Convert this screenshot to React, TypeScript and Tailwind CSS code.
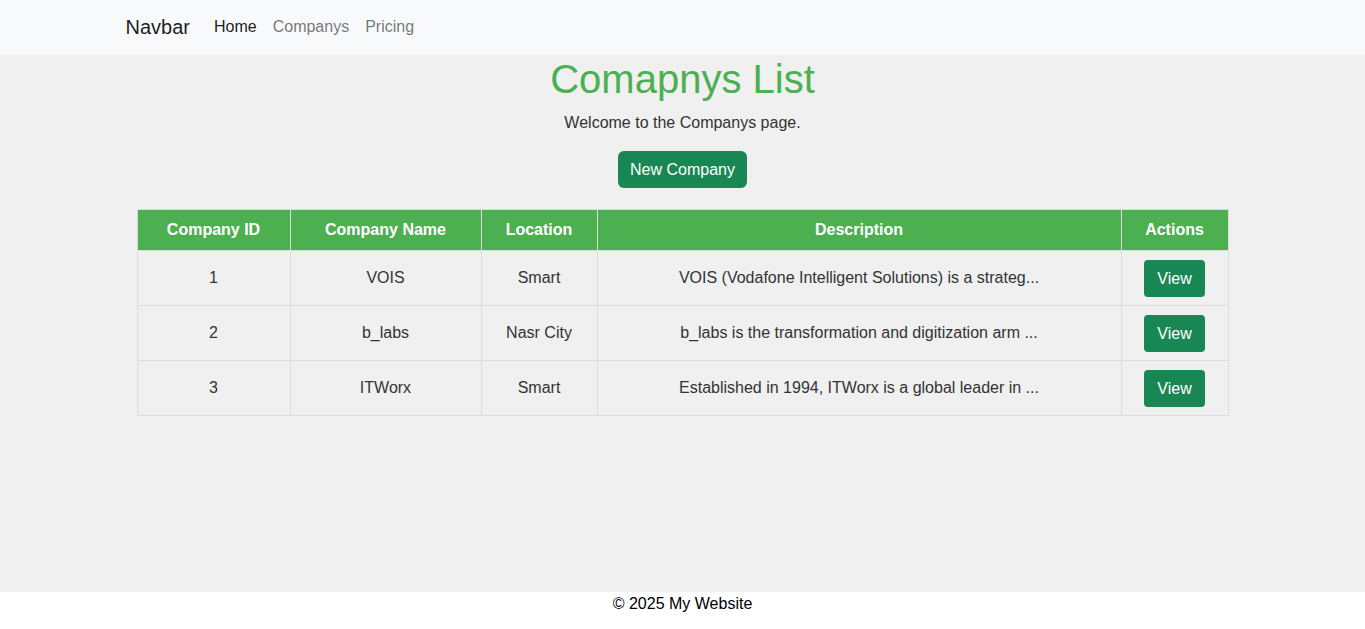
import React from 'react';

type Company = { id: number; name: string; location: string; description: string };

const companies: Company[] = [
  { id: 1, name: 'VOIS', location: 'Smart', description: 'VOIS (Vodafone Intelligent Solutions) is a strateg...' },
  { id: 2, name: 'b_labs', location: 'Nasr City', description: 'b_labs is the transformation and digitization arm ...' },
  { id: 3, name: 'ITWorx', location: 'Smart', description: 'Established in 1994, ITWorx is a global leader in ...' },
];

export default function App() {
  const th = 'border border-[#dddddd] px-2 py-2 text-center font-bold leading-6';
  const td = 'border border-[#dddddd] px-2 py-2 text-center leading-6 h-[55px]';

  return (
    <div className="flex min-h-screen flex-col bg-white text-[16px] text-[#212529] [font-family:'Liberation_Sans',Arial,sans-serif]">
      {/* Navbar */}
      <nav className="h-[55px] bg-[#f8f9fa]">
        <div className="mx-auto flex h-full w-[1140px] items-center pb-[2px] pl-[13px] pr-3">
          <span className="mr-4 text-[20px] leading-[30px] text-[rgba(0,0,0,0.9)]">Navbar</span>
          <a className="px-2 text-[rgba(0,0,0,0.9)]">Home</a>
          <a className="px-2 text-[rgba(0,0,0,0.55)]">Companys</a>
          <a className="px-2 text-[rgba(0,0,0,0.55)]">Pricing</a>
        </div>
      </nav>

      {/* Main */}
      <main className="flex-1 bg-[#f0f0f0] text-center">
        <h1 className="mb-2 text-[40px] leading-[48px] text-[#4caf50]">Comapnys List</h1>
        <p className="mb-4 leading-6 text-[#333333]">Welcome to the Companys page.</p>
        <button className="rounded-[6px] bg-[#198754] px-3 py-[6px] leading-[25px] text-white">New Company</button>

        <table className="mx-auto mt-[21px] w-[80%] border-collapse text-[#333333]">
          <thead>
            <tr className="bg-[#4caf50] text-white">
              <th className={`${th} w-[153px]`}>Company ID</th>
              <th className={`${th} w-[191px]`}>Company Name</th>
              <th className={`${th} w-[116px]`}>Location</th>
              <th className={th}>Description</th>
              <th className={`${th} w-[107px]`}>Actions</th>
            </tr>
          </thead>
          <tbody>
            {companies.map((c) => (
              <tr key={c.id}>
                <td className={td}>{c.id}</td>
                <td className={td}>{c.name}</td>
                <td className={td}>{c.location}</td>
                <td className={td}>{c.description}</td>
                <td className={td}>
                  <button className="rounded-[4px] bg-[#198754] px-[13px] py-[6px] leading-[25px] text-white">View</button>
                </td>
              </tr>
            ))}
          </tbody>
        </table>
      </main>

      {/* Footer */}
      <footer className="h-[37px] bg-white text-center leading-6 text-black">© 2025 My Website</footer>
    </div>
  );
}
